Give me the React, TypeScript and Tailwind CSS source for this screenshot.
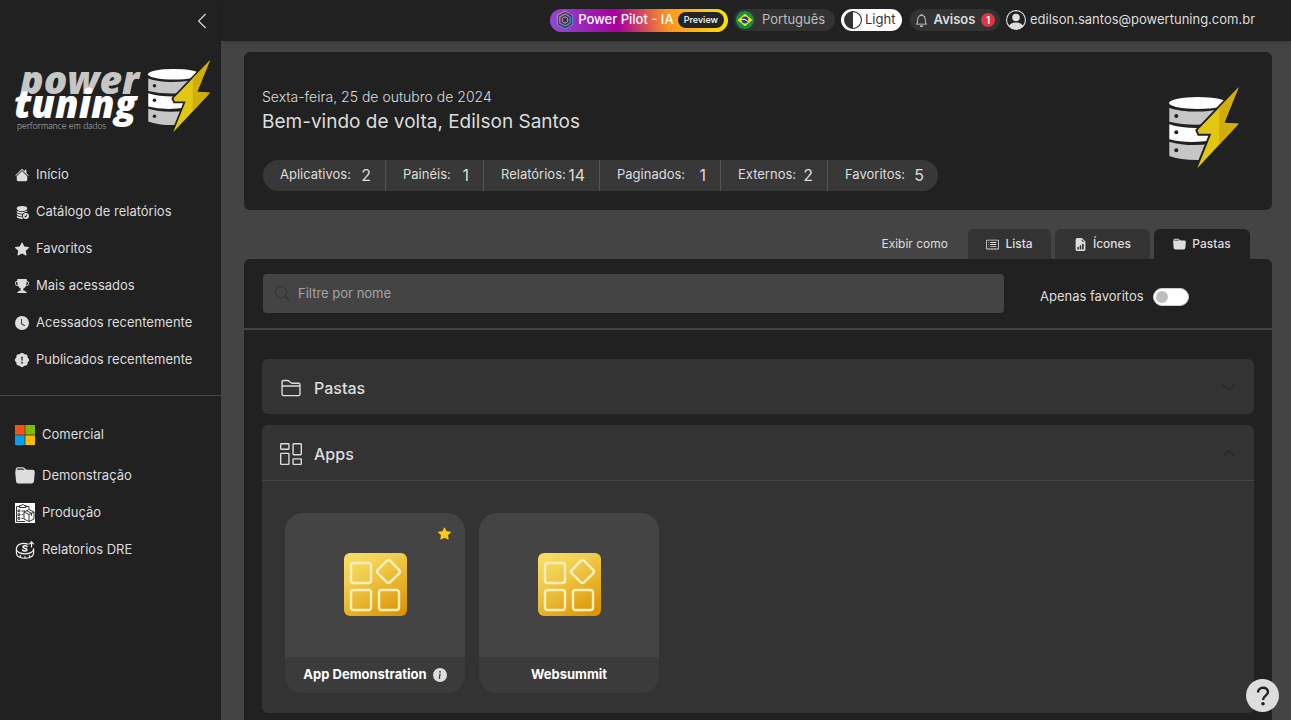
import React from "react";
import type { IconType } from "react-icons";
import {
  BsBell,
  BsCardList,
  BsChevronDown,
  BsChevronLeft,
  BsChevronUp,
  BsCircleHalf,
  BsClockFill,
  BsColumnsGap,
  BsDatabaseFillCheck,
  BsFileEarmarkBarGraphFill,
  BsFolder2,
  BsFolderFill,
  BsHouseFill,
  BsInfoCircleFill,
  BsPatchExclamationFill,
  BsPersonCircle,
  BsSearch,
  BsStarFill,
  BsTrophyFill,
} from "react-icons/bs";

function DatabaseBolt() {
  return (
    <g>
      <ellipse cx="29" cy="16" rx="29" ry="6" fill="#fff" />
      <path d="M.3 20.700C12 25.500 38 26 54 21.500L50 36Q22 40 .3 34.700Z" fill="#c6c6c6" />
      <path d="M.3 37.300Q18 43 45 40L43 53.500Q18 57 .3 52.300Z" fill="#fff" />
      <path d="M.3 54.700Q18 60 42 57L32 73Q12 73.500 .3 69Z" fill="#c6c6c6" />
      <g fill="#212121">
        <circle cx="7.300" cy="29" r="2" />
        <circle cx="7.300" cy="45.300" r="2" />
        <circle cx="7.300" cy="63.300" r="2" />
      </g>
      <path
        d="M69.700.3 55.300 35.700 69.700 36.700 28.300 81.300 42.300 46.700H30L28.500 43.300Z"
        fill="none"
        stroke="#212121"
        strokeWidth="4"
      />
      <path d="M69.700.3 55.300 35.700 69.700 36.700 28.300 81.300 42.300 46.700H30L28.500 43.300Z" fill="#e3c60f" />
      <path d="M69.700.3 55.300 35.700 69.700 36.700 50.300 57.600V20.300Z" fill="#d1ad0a" />
    </g>
  );
}

function Logo() {
  return (
    <svg width="200" height="94" viewBox="0 0 200 94" role="img" aria-label="Power Tuning">
      <g fontStyle="italic" fontWeight="800" fontFamily="'Open Sans', sans-serif">
        <text x="6" y="52" fontSize="39" fill="#c6c6c6">power</text>
        <text x="0" y="76" fontSize="38" fill="#fff">tuning</text>
      </g>
      <text x="3" y="87" fontSize="9" fontWeight="300" fontFamily="Lato, sans-serif" fill="#c6c6c6">performance em dados</text>
      <g transform="translate(134 18) scale(.89)">
        <DatabaseBolt />
      </g>
    </svg>
  );
}

function MicrosoftIcon() {
  return (
    <svg width="20" height="20" viewBox="0 0 20 20" aria-hidden="true">
      <path fill="#5b4636" d="M0 0h20v20H0z" />
      <path fill="#f65314" d="M0 0h9.500v9.500H0z" />
      <path fill="#7cbb00" d="M10.500 0H20v9.500h-9.500z" />
      <path fill="#00a1f1" d="M0 10.500h9.500V20H0z" />
      <path fill="#ffbb00" d="M10.500 10.500H20V20h-9.500z" />
    </svg>
  );
}

function ProductionIcon() {
  return (
    <svg width="20" height="20" viewBox="0 0 20 20" fill="none" stroke="#222" strokeWidth=".9" aria-hidden="true">
      <path fill="#fff" stroke="none" d="M0 0h20v20H0z" />
      <path d="M4.500 3.500H1.500V18.500H10M10.500 3.500h3.500v2.500M4.500 2.500h2Q7.500-.5 9 2.500h2v2H4.500z" />
      <path d="M3 7h1.800v1.800H3zM3 10.800h1.800v1.800H3zM3 14.500h1.800v1.800H3zM6.500 8H10M6.500 11.700h2M6.500 15.400h2" />
      <path d="m9 9 5-2.500L19 9v7l-5 2.500L9 16zM9 9l5 2.500L19 9M14 11.500v7M11.500 7.800l5 2.500v2.500" />
    </svg>
  );
}

function CoinIcon() {
  return (
    <svg width="20" height="20" viewBox="0 0 20 20" fill="none" stroke="#f2f2f2" strokeWidth="1.200" strokeLinecap="round" aria-hidden="true">
      <path d="M13 4.100C7 2 1.400 4.500 1.400 9c0 6.500 17.200 6.500 17.200 0" />
      <path d="M1.400 9v4c0 7 17.200 7 17.200 0V9M5.500 17v-1.500M10 18v-1.500M14.500 17v-1.500" />
      <path d="M16.500 7V2M14.500 3.800l2-2 2 2" />
      <path d="M12 6.700C11 5.200 7.800 5.500 8 7.200c.2 1.500 4 1 4 2.600 0 1.500-3.500 1.600-4.500.2" strokeWidth="1.500" />
    </svg>
  );
}

function PilotIcon() {
  return (
    <svg width="18" height="20" viewBox="0 0 18 20" fill="none" aria-hidden="true">
      <defs>
        <linearGradient id="pilot" x1="0" y1="0" x2="1" y2="1">
          <stop offset="0" stopColor="#e0957f" />
          <stop offset=".5" stopColor="#7d78c8" />
          <stop offset="1" stopColor="#3795c0" />
        </linearGradient>
      </defs>
      <path d="m9 1 7.500 4.300v9.400L9 19l-7.500-4.300V5.300z" fill="#3d3355" stroke="url(#pilot)" strokeWidth="1.200" />
      <path d="m9 3.900 5.200 3v6.200L9 16.100l-5.200-3V6.900z" stroke="url(#pilot)" strokeWidth="1.300" />
      <path d="m9 6.800 2.700 1.500v3.400L9 13.200l-2.700-1.500V8.300z" fill="#35306a" stroke="#c9a09a" strokeWidth="1" />
    </svg>
  );
}

function BrazilFlag() {
  return (
    <svg width="18" height="18" viewBox="0 0 18 18" aria-hidden="true">
      <circle cx="9" cy="9" r="9" fill="#0f9246" />
      <path d="m9 2.800 7.500 6.200L9 15.200 1.500 9z" fill="#fee100" />
      <circle cx="9" cy="9" r="3.400" fill="#21409a" />
      <path d="M5.800 8.200q3.500-.5 6.200 2.200" stroke="#fff" strokeWidth="1" fill="none" />
    </svg>
  );
}

function AppTile() {
  return (
    <svg width="63" height="63" viewBox="0 0 63 63" aria-hidden="true">
      <defs>
        <linearGradient id="tile" x1=".2" y1="0" x2=".8" y2="1">
          <stop offset="0" stopColor="#f8dc62" />
          <stop offset=".3" stopColor="#f1cd4d" />
          <stop offset="1" stopColor="#db9607" />
        </linearGradient>
      </defs>
      <rect width="63" height="63" rx="6" fill="url(#tile)" />
      <g fill="none" stroke="#fdeebb" strokeWidth="2.400">
        <rect x="7" y="10" width="20" height="20" rx="2.500" />
        <rect x="7" y="37" width="20" height="20" rx="2.500" />
        <rect x="35" y="37" width="20" height="20" rx="2.500" />
        <rect x="35.800" y="9.800" width="17.500" height="17.500" rx="2.500" transform="rotate(45 44.500 18.500)" />
      </g>
    </svg>
  );
}

const mainNav: { label: string; icon: IconType }[] = [
  { label: "Início", icon: BsHouseFill },
  { label: "Catálogo de relatórios", icon: BsDatabaseFillCheck },
  { label: "Favoritos", icon: BsStarFill },
  { label: "Mais acessados", icon: BsTrophyFill },
  { label: "Acessados recentemente", icon: BsClockFill },
  { label: "Publicados recentemente", icon: BsPatchExclamationFill },
];

const folderNav = [
  { label: "Comercial", icon: <MicrosoftIcon /> },
  { label: "Demonstração", icon: <BsFolderFill size={20} /> },
  { label: "Produção", icon: <ProductionIcon /> },
  { label: "Relatorios DRE", icon: <CoinIcon /> },
];

const stats = [
  { label: "Aplicativos:", value: 2, width: "w-[122px]" },
  { label: "Painéis:", value: 1, width: "w-[98px]" },
  { label: "Relatórios:", value: 14, width: "w-[116px]" },
  { label: "Paginados:", value: 1, width: "w-[121px]" },
  { label: "Externos:", value: 2, width: "w-[107px]" },
  { label: "Favoritos:", value: 5, width: "w-[111px]" },
];

const views: { label: string; icon: IconType; style: string }[] = [
  { label: "Lista", icon: BsCardList, style: "w-[83px] bg-[#333333]" },
  { label: "Ícones", icon: BsFileEarmarkBarGraphFill, style: "w-[95px] bg-[#333333]" },
  { label: "Pastas", icon: BsFolderFill, style: "w-24 bg-[#212121]" },
];

const apps = [
  { name: "App Demonstration", favorite: true, info: true },
  { name: "Websummit", favorite: false, info: false },
];

function Sidebar() {
  return (
    <aside className="flex w-[221px] shrink-0 flex-col bg-[#212121]">
      <div className="flex h-[42px] items-center justify-end pr-2.5">
        <button type="button" aria-label="Recolher menu">
          <BsChevronLeft size={18} />
        </button>
      </div>
      <a href="#" className="ml-3.5 block">
        <Logo />
      </a>
      <nav className="mt-5 flex flex-col">
        {mainNav.map(({ label, icon: Icon }) => (
          <a key={label} href="#" className="flex h-[37px] items-center gap-[7px] pl-[15px]">
            <Icon size={14} />
            {label}
          </a>
        ))}
      </nav>
      <nav className="mt-[17px] flex flex-col border-t border-[#444444] pt-5">
        {folderNav.map(({ label, icon }) => (
          <a key={label} href="#" className="flex h-[37px] items-center gap-[7px] pl-[15px] first:mb-1">
            {icon}
            {label}
          </a>
        ))}
      </nav>
    </aside>
  );
}

function Header() {
  return (
    <header className="flex h-[41px] items-center justify-end gap-1.5 bg-[#212121] pr-6 pb-px shadow-md">
      <button
        type="button"
        className="flex h-[23px] w-[178px] items-center justify-between rounded-full bg-[linear-gradient(80deg,#8f4bdb_0%,#a8009a_38%,#ff9420_66%,#ffe500_100%)] pr-1 pl-1.5 text-[13px] font-medium whitespace-nowrap text-white"
      >
        <PilotIcon />
        Power Pilot - IA
        <span className="rounded-full bg-[#212529] px-1.5 py-0.5 text-[9px] leading-3">Preview</span>
      </button>
      <button type="button" className="flex h-[22px] w-[101px] items-center gap-2 rounded-full bg-[#333333] pl-0.5 text-[13px] text-[#bdbdbd]">
        <BrazilFlag />
        Português
      </button>
      <button type="button" className="flex h-[22px] w-[61px] items-center gap-[3px] rounded-full bg-white pl-[3px] text-[13px] text-[#333333]">
        <BsCircleHalf size={18} />
        Light
      </button>
      <button type="button" className="ml-0.5 flex h-[22px] w-[90px] items-center justify-between rounded-full bg-[#333333] px-[5px] text-[13px] font-semibold">
        <BsBell size={13} />
        Avisos
        <span className="flex size-[14px] items-center justify-center rounded-full bg-[#dc3545] text-[10px] text-white">1</span>
      </button>
      <a href="#" className="flex w-[261px] items-center gap-1 text-[13px]">
        <BsPersonCircle size={20} />
        edilson.santos@powertuning.com.br
      </a>
    </header>
  );
}

function Welcome() {
  return (
    <section className="flex justify-between rounded-md bg-[#212121] pt-[35px] pr-8 pb-[19px] pl-[18px]">
      <div>
        <p className="text-[14px] leading-5 font-light">Sexta-feira, 25 de outubro de 2024</p>
        <h1 className="pt-px text-[19px] leading-7">Bem-vindo de volta, Edilson Santos</h1>
        <dl className="mt-6 ml-px flex h-[31px] overflow-hidden rounded-full bg-[#383838]">
          {stats.map(({ label, value, width }) => (
            <div
              key={label}
              className={`flex items-center justify-between border-l border-[#555555] pr-3.5 pb-px pl-[17px] first:border-l-0 ${width}`}
            >
              <dt className="text-[13px]">{label}</dt>
              <dd className="text-base">{value}</dd>
            </div>
          ))}
        </dl>
      </div>
      <svg width="71" height="82" viewBox="0 0 71 82" aria-hidden="true">
        <DatabaseBolt />
      </svg>
    </section>
  );
}

function AppCard({ name, favorite, info }: { name: string; favorite: boolean; info: boolean }) {
  return (
    <article className="relative flex h-[180px] w-[180px] flex-col overflow-hidden rounded-[18px] bg-[#444444]">
      {favorite && <BsStarFill size={13} className="absolute top-3.5 right-3.5 text-[#fdcb15]" />}
      <a href="#" aria-label={name} className="flex flex-1 items-center justify-center pb-0.5">
        <AppTile />
      </a>
      <h3 className="flex h-9 items-center justify-center gap-1.5 bg-[#3b3b3b] text-[13px] font-bold whitespace-nowrap text-white">
        {name}
        {info && <BsInfoCircleFill size={14} className="text-[#dddddd]" />}
      </h3>
    </article>
  );
}

export default function App() {
  return (
    <div className="flex min-h-screen bg-[#444444] font-['Inter',sans-serif] text-[13px] text-[#dddddd]">
      <Sidebar />
      <div className="flex min-w-0 flex-1 flex-col">
        <Header />
        <main className="flex flex-1 flex-col pt-[11px] pr-[19px] pl-[23px]">
          <Welcome />
          <div className="mt-[19px] flex h-[30px] items-end justify-end gap-1 pr-[22px]">
            <span className="mr-4 self-center text-[12px]">Exibir como</span>
            {views.map(({ label, icon: Icon, style }) => (
              <button
                key={label}
                type="button"
                className={`flex h-full items-center justify-center gap-1.5 rounded-t-md text-[12px] font-medium ${style}`}
              >
                <Icon size={13} />
                {label}
              </button>
            ))}
          </div>
          <section className="flex-1 rounded-t-md bg-[#212121]">
            <div className="flex items-center border-b-2 border-[#444444] px-[19px] py-[15px]">
              <label className="flex h-[39px] flex-1 items-center gap-2 rounded bg-[#444444] px-3">
                <BsSearch size={15} className="text-[#363636]" />
                <input
                  type="text"
                  placeholder="Filtre por nome"
                  aria-label="Filtre por nome"
                  className="min-w-0 flex-1 bg-transparent outline-none placeholder:text-[#a5a5a5]"
                />
              </label>
              <label className="ml-9 flex w-[213px] items-center gap-[9px] pt-[7px]">
                Apenas favoritos
                <input
                  type="checkbox"
                  className="h-[18px] w-9 appearance-none rounded-full border border-[#cccccc] bg-white before:m-0.5 before:block before:size-3 before:rounded-full before:bg-[#bfbfbf]"
                />
              </label>
            </div>
            <div className="flex flex-col gap-[11px] px-[18px] pt-[29px] pb-[7px]">
              <section className="rounded-md bg-[#333333]">
                <button type="button" className="flex h-[55px] w-full items-center gap-3 px-[18px] pt-0.5 text-base font-medium">
                  <BsFolder2 size={22} />
                  Pastas
                  <BsChevronDown size={15} className="ml-auto text-[#212529]" />
                </button>
              </section>
              <section className="rounded-md bg-[#333333]">
                <button type="button" className="flex h-14 w-full items-center gap-3 border-b border-[#444444] px-[18px] pt-0.5 text-base font-medium">
                  <BsColumnsGap size={22} />
                  Apps
                  <BsChevronUp size={15} className="ml-auto text-[#212529]" />
                </button>
                <div className="flex flex-wrap gap-3.5 px-[23px] pt-8 pb-5">
                  {apps.map((app) => (
                    <AppCard key={app.name} {...app} />
                  ))}
                </div>
              </section>
            </div>
          </section>
        </main>
      </div>
      <button
        type="button"
        aria-label="Ajuda"
        className="fixed right-3 bottom-2 flex size-[33px] items-center justify-center rounded-full bg-[#dddddd] text-[#212121]"
      >
        <svg width="14" height="20" viewBox="0 0 14 20" fill="none" stroke="currentColor" strokeWidth="2.400" aria-hidden="true">
          <path d="M2 6.500C2 3.500 4 1.800 7 1.800s5 1.700 5 4.200c0 3.500-5 3.800-5 8" />
          <circle cx="7" cy="17.700" r="1.800" fill="currentColor" stroke="none" />
        </svg>
      </button>
    </div>
  );
}
